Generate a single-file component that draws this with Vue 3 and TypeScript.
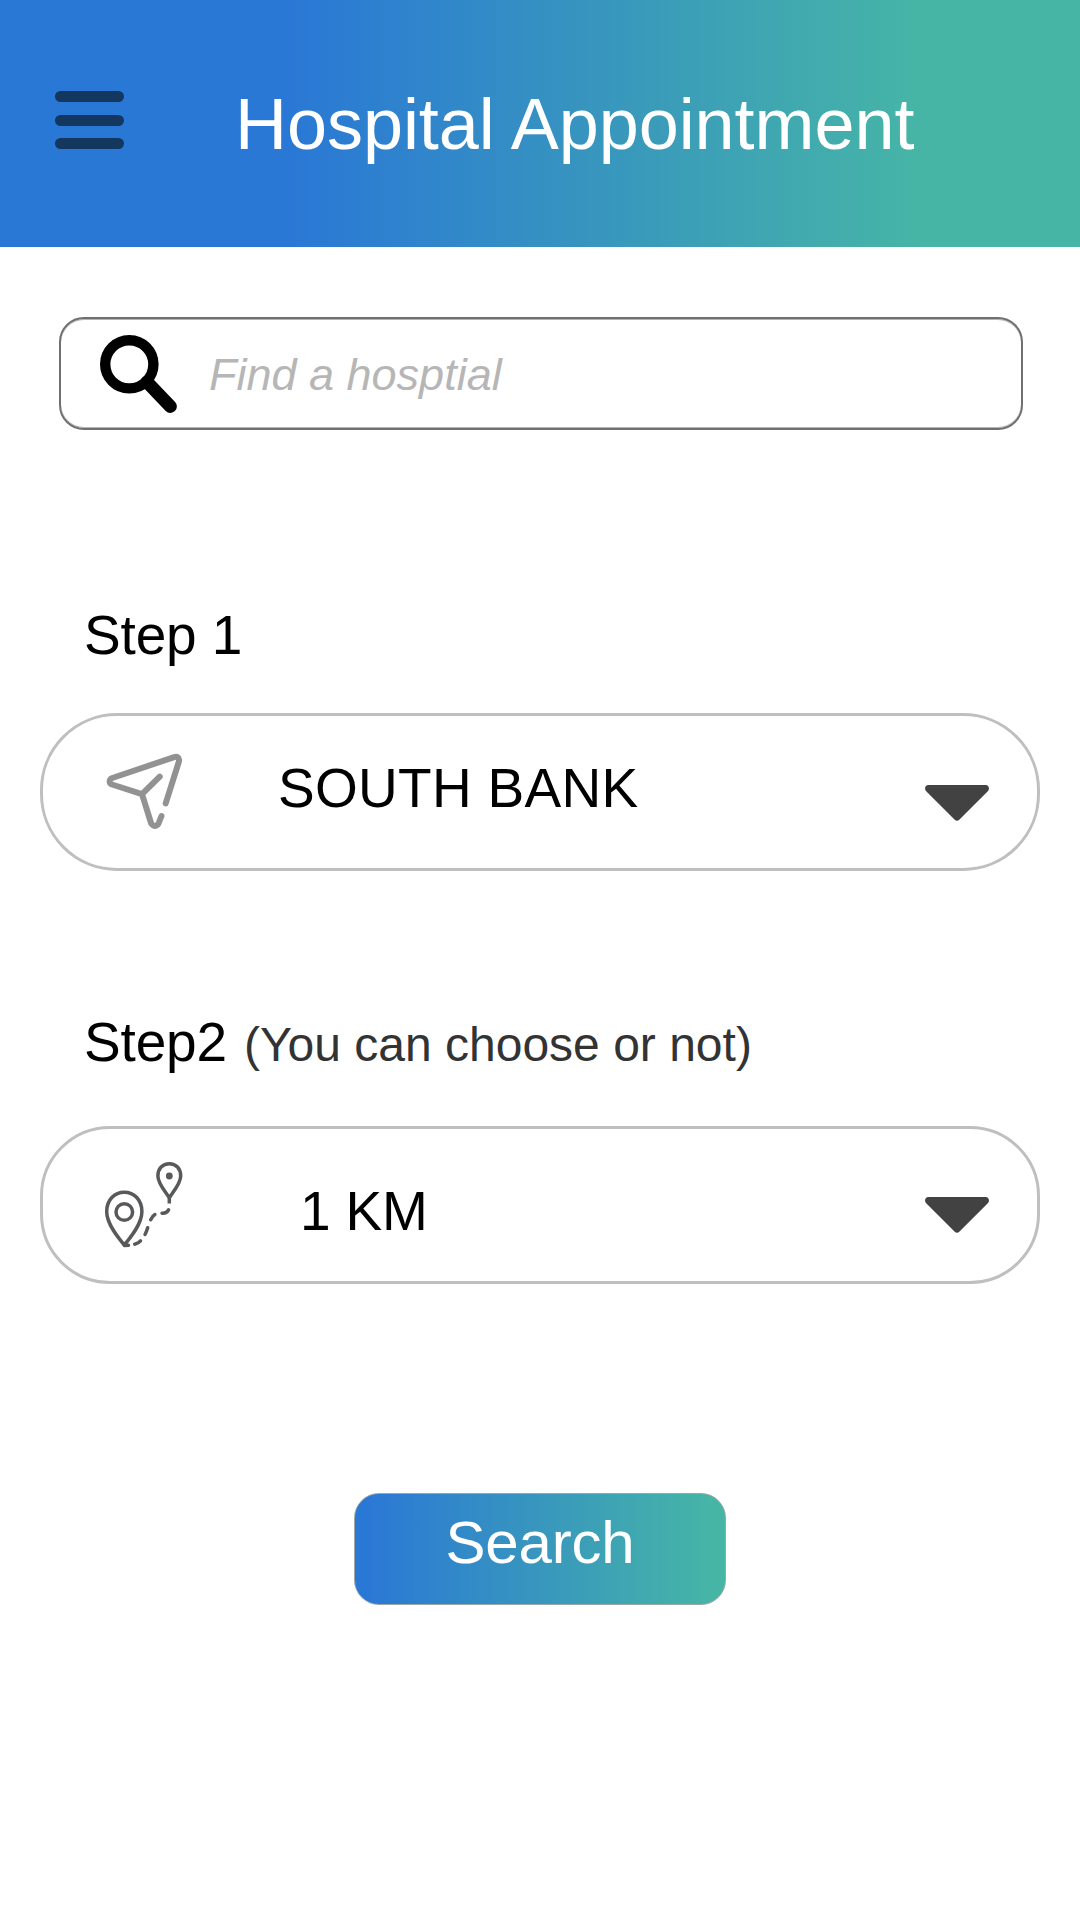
<script setup lang="ts">
import { ref } from 'vue'

const query = ref('')
const suburb = ref('SOUTH BANK')
const distance = ref('1 KM')
</script>

<template>
  <div class="page">
    <header class="header">
      <button class="menu" aria-label="Menu"><i></i><i></i><i></i></button>
      <h1 class="title"><span class="t">Hospital Appointment</span></h1>
    </header>

    <main class="main">
      <label class="search">
        <svg class="glass" width="78" height="80" viewBox="0 0 78 80" fill="none" stroke="#000">
          <circle cx="29.3" cy="29.3" r="24.1" stroke-width="10.4" />
          <path d="M47 47 70.4 71.4" stroke-width="13" stroke-linecap="round" />
        </svg>
        <span class="hint t">{{ query || 'Find a hosptial' }}</span>
      </label>

      <h2 class="label first"><span class="t">Step 1</span></h2>
      <div class="select one">
        <svg class="icon" width="80" height="80" viewBox="0 0 80 80" fill="none" stroke="#929292" stroke-width="6" stroke-linecap="round" stroke-linejoin="round">
          <path d="M56.700 51.300 69.900 9.500C70.800 5.800 68.200 4.200 65.200 5.100L3.300 26C-.2 27.500-.2 31 3 32.500L33 42.200 42.200 71.500Q46 76.500 49.500 71.500L52.500 64M33 42.200 50.700 24.700" />
        </svg>
        <span class="value t">{{ suburb }}</span>
        <svg class="caret" width="64" height="36" viewBox="0 0 64 36"><path d="M3.500 0H60.500C64 0 65 4 62.800 6.200L34.500 34.500Q32 37 29.500 34.500L1.200 6.200C-1 4 0 0 3.500 0Z" fill="#424242" /></svg>
      </div>

      <h2 class="label second"><span class="t">Step2</span><small class="t">(You can choose or not)</small></h2>
      <div class="select two">
        <svg class="icon" width="80" height="90" viewBox="0 0 80 90" fill="none" stroke="#58595b" stroke-width="3.500">
          <path d="M19.300 83C13 75.500 1.700 62 1.700 49.500C1.700 38 9.500 30.200 19.300 30.200S36.900 38 36.900 49.500C36.900 62 25.600 75.500 19.300 83Z" stroke-linejoin="round" />
          <circle cx="19.300" cy="50" r="8.300" />
          <path d="M64.300 36C62 31.500 52.900 22 52.900 14C52.900 6.500 57.600 1.700 64.300 1.700S75.700 6.500 75.700 14C75.700 22 66.600 31.500 64.300 36V41.500" />
          <circle cx="64.300" cy="14" r="3.400" fill="#58595b" stroke="none" />
          <path d="M19.500 83.500 23.500 83.300M29.700 82.200Q33.300 81.300 35.500 78.800M40 72.500Q41.600 69.500 42.700 65.800M45.700 57.800Q47.500 54 49.900 52.600M57 51.200C60.500 51.500 62.600 50 63.600 47.800" stroke-linecap="round" />
        </svg>
        <span class="value t">{{ distance }}</span>
        <svg class="caret" width="64" height="36" viewBox="0 0 64 36"><path d="M3.500 0H60.500C64 0 65 4 62.800 6.200L34.500 34.500Q32 37 29.500 34.500L1.200 6.200C-1 4 0 0 3.500 0Z" fill="#424242" /></svg>
      </div>

      <button class="submit"><span class="t">Search</span></button>
    </main>
  </div>
</template>

<style>
body { margin: 0; background: #fff; }
</style>

<style scoped>
.page { width: 1080px; height: 1920px; background: #fff; overflow: hidden; font-family: "Liberation Sans", Arial, sans-serif; color: #000; }
.header { height: 247px; box-sizing: border-box; padding: 91px 0 0 55px; display: flex; align-items: flex-start; background: linear-gradient(90deg, #2a78d5 27%, #46b5a6 85%); }
.menu { width: 69px; padding: 0; border: 0; background: none; display: flex; flex-direction: column; gap: 12.500px; }
.menu i { height: 11px; border-radius: 6px; background: #14375f; }
.t { display: block; white-space: nowrap; }
.title { margin: -7px 0 0 111px; font-size: 72px; line-height: 80px; font-weight: 400; letter-spacing: -0.050px; color: #fff; }
.main { display: flex; flex-direction: column; }
.search { box-sizing: border-box; width: 964px; height: 113px; margin: 70px 0 0 59px; border: 2px solid #707070; border-radius: 25px; box-shadow: inset 0 1px #b4b4b4, inset 0 -1px #b4b4b4; display: flex; align-items: flex-start; }
.glass { margin: 16px 0 0 39px; flex: none; }
.hint { margin: 31px 0 0 31px; font-size: 45px; line-height: 50px; font-style: italic; color: #b7b6b6; }
.label { margin: 0 0 0 84px; height: 60px; font-size: 55px; line-height: 60px; font-weight: 400; letter-spacing: -0.150px; display: flex; }
.label.first { margin-top: 175px; }
.label.second { margin-top: 141px; }
.label small { margin-left: 17px; font-size: 48px; line-height: 65px; letter-spacing: 0; color: #333; }
.select { box-sizing: border-box; width: 1000px; height: 158px; margin-left: 40px; border: 3px solid #bfbfbf; border-radius: 77px; display: flex; align-items: flex-start; }
.select.one { margin-top: 48px; }
.select.two { margin-top: 54px; border-radius: 70px; }
.icon { flex: none; overflow: visible; }
.one .icon { margin: 36px 0 0 66px; }
.two .icon { margin: 33px 0 0 62px; }
.value { font-size: 55px; line-height: 60px; width: 600px; }
.one .value { margin: 42px 0 0 89px; letter-spacing: 0.300px; }
.two .value { margin: 52px 0 0 115px; letter-spacing: -0.200px; }
.caret { display: block; flex: none; margin-left: auto; margin-right: 48px; }
.one .caret { margin-top: 69px; }
.two .caret { margin-top: 68px; }
.submit { box-sizing: border-box; width: 372px; height: 112px; margin: 209px 0 0 354px; padding: 0 0 12px; border: 1px solid #9aa7a7; border-radius: 25px; background: linear-gradient(90deg, #2a78d5 3%, #46b5a6 96%); font: 60px/66px "Liberation Sans", Arial, sans-serif; letter-spacing: -0.200px; color: #fff; display: flex; align-items: center; justify-content: center; }
</style>
